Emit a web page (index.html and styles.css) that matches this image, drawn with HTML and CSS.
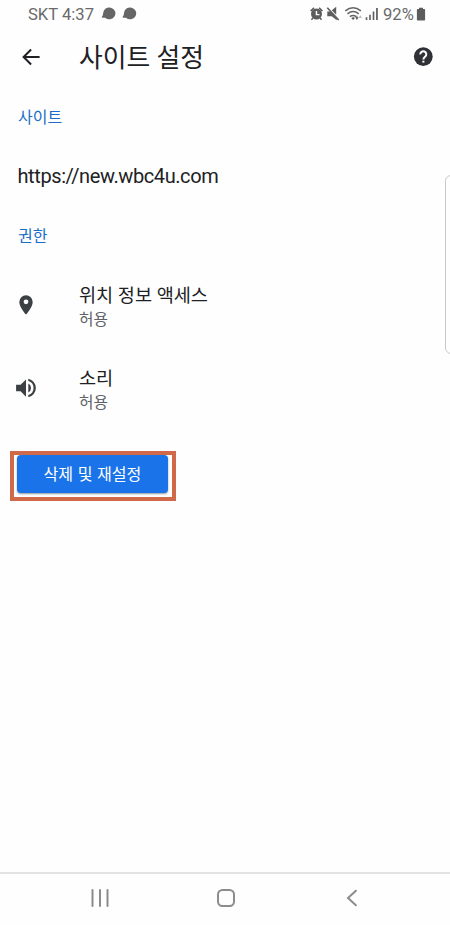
FILE: index.html
```html
<!DOCTYPE html>
<html lang="ko">
<head>
<meta charset="utf-8">
<title>사이트 설정</title>
<link rel="stylesheet" href="styles.css">
</head>
<body>
<div class="screen">
  <div class="status-bar">
    <span class="carrier">SKT 4:37</span>
    <svg class="bubbles" width="36" height="14" viewBox="0 0 36 14">
      <path d="M0.6 10.2C1.8 8.7 2 7.8 2.2 6.1A6.1 5.9 0 1 1 4.2 10.7C3 11 1.8 10.8.6 10.2ZM21.4 10.2C22.6 8.7 22.8 7.8 23 6.1A6.1 5.9 0 1 1 25 10.7C23.8 11 22.6 10.8 21.4 10.2Z"/>
    </svg>
    <div class="indicators">
      <svg width="70" height="16" viewBox="0 0 70 16">
        <path fill-rule="evenodd" d="M6.5 2.5a5.5 5.5 0 1 1 0 11a5.5 5.5 0 0 1 0-11ZM5.7 5v4.3h3.8V7.9H7.2V5Z"/>
        <path d="M.1 4.4 3.5 1.3 4.6 2.5 1.2 5.5ZM8.5 2.5 9.6 1.3 13 4.4 11.9 5.5ZM2.3 11.5l1.2 1.1-1.5 1.6-1.1-1ZM10.7 11.5l-1.2 1.1 1.5 1.6 1.1-1Z"/>
        <path d="M17.3 5.5h3l6.5 7v1.7L21.7 10.2h-4.4ZM21.8 4.2l4.4-3.4v8Z"/>
        <path class="line" d="m17.3 1.8 11.4 12.2"/>
        <path class="wifi" d="M35.3 4.9q7.8-6.4 15.6 0M37.5 7.8q5.6-4.5 11.2 0M39.8 10.6q3.3-2.4 6.4 0"/>
        <path d="m41.2 12 1.9 1.9 1.9-1.9q-1.9-1.3-3.8 0ZM45.2 11.2h1.2V9.7h1v1.5h1.2L46.9 14Z"/>
        <path class="light" d="M50.3 9.2 52.1 12h-3.6Z"/>
        <path d="M55.7 11.3h1.6v2.8h-1.6ZM59.2 8.7h1.6v5.4h-1.6ZM62.7 5.4h1.6v8.7h-1.6ZM66.1 2h1.7v12.1h-1.7Z"/>
      </svg>
      <span class="percent">92%</span>
      <svg width="10" height="14" viewBox="0 0 10 14"><path d="M3 .7h4v1.4h1.4q.7 0 .7.7v9.9q0 .8-.8.8H1.7q-.8 0-.8-.8V2.8q0-.7.7-.7H3Z"/></svg>
    </div>
  </div>

  <header class="app-bar">
    <svg class="back" width="18" height="18" viewBox="0 0 18 18"><path d="M17.6 9H1.7M9.1 1.5 1.6 9l7.5 7.5"/></svg>
    <h1>사이트 설정</h1>
    <svg class="help" width="20" height="20" viewBox="0 0 20 20">
      <circle cx="10.3" cy="9.6" r="9.4"/>
      <path d="M7.3 7.4a3 3 0 1 1 5.2 1.9C11.1 10.5 10.4 10.8 10.4 12.5"/>
      <path class="dot" d="M9.4 13.7h2v1.9h-2Z"/>
    </svg>
  </header>

  <main>
    <h2>사이트</h2>
    <div class="url">https://new.wbc4u.com</div>
    <h2>권한</h2>
    <div class="permission">
      <svg width="24" height="24" viewBox="0 0 24 24"><path fill-rule="evenodd" d="M12 2.2a6.7 6.7 0 0 0-6.7 6.7C5.3 14 12 21.6 12 21.6S18.7 14 18.7 8.9A6.7 6.7 0 0 0 12 2.2Zm0 4.2a2.4 2.4 0 1 1 0 4.8 2.4 2.4 0 0 1 0-4.8Z"/></svg>
      <div class="labels"><div class="name">위치 정보 액세스</div><div class="state">허용</div></div>
    </div>
    <div class="permission">
      <svg width="24" height="24" viewBox="0 0 24 24"><path d="M2.1 8.8v6.5h4.5l5.4 5.4V3.4L6.6 8.8ZM17 12a4.9 4.9 0 0 0-2.7-4.4v8.8A4.9 4.9 0 0 0 17 12ZM14.3 2.7V5a7.3 7.3 0 0 1 0 14v2.3a9.5 9.5 0 0 0 0-18.6Z"/></svg>
      <div class="labels"><div class="name">소리</div><div class="state">허용</div></div>
    </div>
    <div class="highlight"><button>삭제 및 재설정</button></div>
  </main>

  <nav>
    <svg width="18" height="20" viewBox="0 0 18 20"><path d="M1.5 2v16M9 2v16M16.5 2v16"/></svg>
    <svg width="20" height="20" viewBox="0 0 20 20"><rect x="2" y="2" width="16" height="16" rx="4.5"/></svg>
    <svg width="18" height="20" viewBox="0 0 18 20"><path d="M12.9 2.7 5 10l7.9 7.3"/></svg>
  </nav>
  <div class="edge-handle"></div>
</div>
</body>
</html>
```
FILE: styles.css
```css
* { box-sizing: border-box; }
body {
  margin: 0;
  background: #fefefe;
  color: #202124;
  font-family: Roboto, "Noto Sans CJK KR", sans-serif;
}
svg { display: block; flex: none; }
h1, h2 { margin: 0; font-weight: 400; }
.screen {
  position: relative;
  display: flex;
  flex-direction: column;
  width: 450px;
  height: 925px;
  overflow: hidden;
}
.status-bar {
  display: flex;
  align-items: center;
  height: 28px;
  padding: 0 24px 0 28px;
  color: #6a6a6a;
  fill: #5c5c5c;
  font-size: 16.6px;
}
.carrier { width: 73px; white-space: nowrap; }
.bubbles { fill: #666; }
.indicators { display: flex; align-items: center; margin-left: auto; }
.line { fill: none; stroke: #5c5c5c; stroke-width: 1.6; }
.wifi { fill: none; stroke: #666; stroke-width: 1.5; }
.light { fill: #bbb; }
.percent { width: 33px; margin-left: 3px; white-space: nowrap; }
.app-bar {
  display: flex;
  align-items: center;
  height: 58px;
  padding: 0 17px 0 22px;
}
.back { fill: none; stroke: #202124; stroke-width: 2; }
.app-bar h1 {
  margin-left: 39px;
  padding-top: 2px;
  font-size: 25.8px;
  line-height: 38px;
}
.help { margin-left: auto; fill: #303136; }
.help path { fill: none; stroke: #fff; stroke-width: 2; }
.help .dot { fill: #fff; stroke: none; }
main { padding: 20px 10px 0; flex: 1; }
h2 {
  padding-left: 8px;
  color: #1a6dc8;
  font-size: 16px;
  line-height: 24px;
}
.url {
  margin: 34px 0 37px;
  padding-left: 7.5px;
  font-size: 20px;
  letter-spacing: -0.4px;
  line-height: 24px;
}
.permission {
  display: flex;
  align-items: center;
  height: 83px;
  padding-left: 4px;
  fill: #3c4043;
}
h2 + .permission { margin-top: 14px; }
.labels { margin-left: 41px; padding-top: 5px; }
.name { font-size: 18.6px; line-height: 26px; }
.state { color: #5f6368; font-size: 15.8px; line-height: 22px; }
.highlight {
  width: 166px;
  height: 50px;
  margin-top: 22px;
  padding: 0 3px;
  border: 4px solid #d0694a;
}
button {
  display: block;
  width: 151px;
  height: 38px;
  padding: 0 0 2px;
  border: 0;
  border-radius: 4px;
  background: #1a73e8;
  box-shadow: 0 1px 2px #9298a0;
  color: #fff;
  font: 400 16.1px/34px "Noto Sans CJK KR", sans-serif;
}
nav {
  display: flex;
  justify-content: space-between;
  align-items: center;
  height: 53px;
  padding: 0 89px 3px 91px;
  border-top: 2px solid #e2e2e2;
  fill: none;
  stroke: #8c8c8c;
  stroke-width: 2;
  stroke-linecap: round;
}
.edge-handle {
  position: absolute;
  top: 175px;
  left: 445px;
  width: 12px;
  height: 179px;
  border: 1px solid #c8c8c8;
  border-radius: 6px;
}
```
